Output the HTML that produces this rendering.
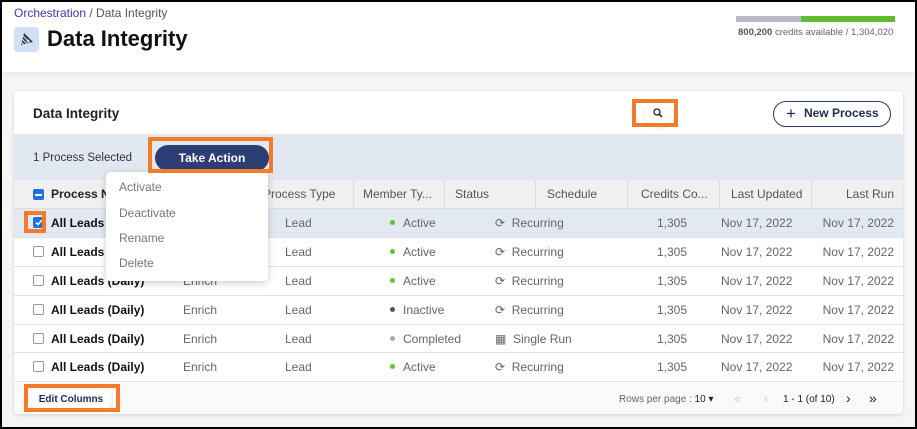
<!DOCTYPE html>
<html><head><meta charset="utf-8"><style>
*{box-sizing:border-box;margin:0;padding:0}
body{width:917px;height:429px;overflow:hidden;font-family:"Liberation Sans",sans-serif;background:#000;position:relative}
.frame{position:absolute;left:2px;top:2px;width:913px;height:425px;background:#f5f5f5;overflow:hidden}
.hdr{position:absolute;left:0;top:0;width:913px;height:70px;background:#fff;box-shadow:0 2px 6px rgba(0,0,0,.06)}
.a{position:absolute;white-space:nowrap}
.card{position:absolute;left:12px;top:89px;width:889px;height:323px;background:#fff;border-radius:4px;box-shadow:0 1px 3px rgba(0,0,0,.15);overflow:hidden}
.sel{position:absolute;left:0;top:43px;width:889px;height:46px;background:#e2e8f1}
.th{position:absolute;left:0;top:89px;width:889px;height:29px;background:#f0f0f0;border-bottom:1px solid #ddd;font-size:12px;color:#555}
.th .sep{position:absolute;top:0;width:1px;height:29px;background:#dcdcdc}
.row{position:absolute;left:0;width:889px;height:29px;border-bottom:1px solid #e2e2e2;font-size:12px;color:#666}
.row span,.th span{position:absolute;top:7px}
.cb{position:absolute;left:19px;top:8px;width:11px;height:11px;border:1.5px solid #999;border-radius:2px;background:#fff}
.dot{display:inline-block;width:5px;height:5px;border-radius:50%;margin-right:8px;vertical-align:middle;position:relative;top:-1px}
.ob{position:absolute;border:4px solid #f47b2a}
.menu{position:absolute;width:162px;height:109px;background:#fff;border-radius:4px;box-shadow:0 2px 8px rgba(0,0,0,.2);font-size:12px;color:#777}
.menu div{position:absolute;left:13px}
</style></head><body>
<div class="frame">
<div class="hdr">
 <div class="a" style="left:12px;top:4px;font-size:12px;color:#555"><span style="color:#4a2fbd">Orchestration</span> / Data Integrity</div>
 <div class="a" style="left:12px;top:25px;width:25px;height:25px;background:#cfe0f7;border-radius:4px"></div>
 <svg class="a" style="left:15px;top:28px" width="19" height="19" viewBox="0 0 19 19"><path d="M7 3 L16 12 L4 15 Z" fill="#333"/><path d="M4 8 L11 15 M3 11 L7 15 M5 5 L13 13" stroke="#cfe0f7" stroke-width="1.2"/><circle cx="11" cy="11" r="1.5" fill="#cfe0f7"/></svg>
 <div class="a" style="left:45px;top:24px;font-size:22px;font-weight:bold;color:#111">Data Integrity</div>
 <div class="a" style="left:734px;top:14px;width:65px;height:6px;background:#b8bac2"></div>
 <div class="a" style="left:799px;top:14px;width:94px;height:6px;background:#62bb2e"></div>
 <div class="a" style="left:736px;top:25px;font-size:9.5px;color:#666"><b style="color:#555">800,200</b> credits available / 1,304,020</div>
</div>
<div class="card">
 <div class="a" style="left:19px;top:15px;font-size:13.5px;font-weight:bold;color:#222">Data Integrity</div>
 <div class="a" style="left:630px;top:12px;width:30px;height:23px;border-radius:12px;background:#fff;box-shadow:0 1px 3px rgba(0,0,0,.15)"></div>
 <svg class="a" style="left:639px;top:17px" width="10" height="10" viewBox="0 0 10 10"><circle cx="4" cy="4" r="3" fill="none" stroke="#222" stroke-width="1.3"/><path d="M6.2 6.2 L9 9" stroke="#222" stroke-width="1.5"/></svg>
 <div class="a" style="left:759px;top:10px;width:118px;height:26px;border:1.5px solid #2e3a6a;border-radius:13px;font-size:12px;font-weight:bold;color:#1f2a5a;line-height:23px;padding-left:12px"><span style="font-size:17px;font-weight:normal;vertical-align:-2px;margin-right:8px">+</span>New Process</div>
 <div class="sel">
  <div class="a" style="left:19px;top:18px;font-size:11.5px;color:#333">1 Process Selected</div>
  <div class="a" style="left:141px;top:11px;width:114px;height:26px;background:#2b3f75;border-radius:13px;color:#fff;font-size:12px;font-weight:bold;text-align:center;line-height:26px">Take Action</div>
 </div>
 <div class="th">
  <div class="a" style="left:19px;top:9px;width:11px;height:11px;background:#1e6fe0;border-radius:2px"><div style="position:absolute;left:2px;top:4.5px;width:7px;height:2px;background:#fff"></div></div>
  <span style="left:37px;font-weight:bold;color:#222">Process N</span>
  <span style="left:249px">Process Type</span>
  <div class="sep" style="left:339px"></div><span style="left:349px">Member Ty...</span>
  <div class="sep" style="left:430px"></div><span style="left:441px">Status</span>
  <div class="sep" style="left:521px"></div><span style="left:533px">Schedule</span>
  <div class="sep" style="left:613px"></div><span style="left:627px">Credits Co...</span>
  <div class="sep" style="left:705px"></div><span style="left:717px">Last Updated</span>
  <div class="sep" style="left:797px"></div><span style="right:9px">Last Run</span>
 </div>
 <div class="row" style="top:118px;background:#e3e9f2"><div class="cb" style="background:#1e6fe0;border-color:#1e6fe0"></div><svg class="a" style="left:21px;top:10px" width="8" height="7"><path d="M1 3.5 L3 5.5 L7 1" stroke="#fff" stroke-width="1.5" fill="none"/></svg><span style="left:37px;font-weight:bold;color:#111">All Leads (Daily)</span><span style="left:169px">Enrich</span><span style="left:271px">Lead</span><span style="left:376px"><i class="dot" style="background:#6cc02e"></i>Active</span><span style="left:481px">⟳&nbsp;&nbsp;Recurring</span><span style="right:216px">1,305</span><span style="left:707px">Nov 17, 2022</span><span style="right:9px">Nov 17, 2022</span></div>
 <div class="row" style="top:147px"><div class="cb"></div><span style="left:37px;font-weight:bold;color:#111">All Leads (Daily)</span><span style="left:169px">Enrich</span><span style="left:271px">Lead</span><span style="left:376px"><i class="dot" style="background:#6cc02e"></i>Active</span><span style="left:481px">⟳&nbsp;&nbsp;Recurring</span><span style="right:216px">1,305</span><span style="left:707px">Nov 17, 2022</span><span style="right:9px">Nov 17, 2022</span></div>
 <div class="row" style="top:176px"><div class="cb"></div><span style="left:37px;font-weight:bold;color:#111">All Leads (Daily)</span><span style="left:169px">Enrich</span><span style="left:271px">Lead</span><span style="left:376px"><i class="dot" style="background:#6cc02e"></i>Active</span><span style="left:481px">⟳&nbsp;&nbsp;Recurring</span><span style="right:216px">1,305</span><span style="left:707px">Nov 17, 2022</span><span style="right:9px">Nov 17, 2022</span></div>
 <div class="row" style="top:205px"><div class="cb"></div><span style="left:37px;font-weight:bold;color:#111">All Leads (Daily)</span><span style="left:169px">Enrich</span><span style="left:271px">Lead</span><span style="left:376px"><i class="dot" style="background:#555"></i>Inactive</span><span style="left:481px">⟳&nbsp;&nbsp;Recurring</span><span style="right:216px">1,305</span><span style="left:707px">Nov 17, 2022</span><span style="right:9px">Nov 17, 2022</span></div>
 <div class="row" style="top:234px;height:28px"><div class="cb"></div><span style="left:37px;font-weight:bold;color:#111">All Leads (Daily)</span><span style="left:169px">Enrich</span><span style="left:271px">Lead</span><span style="left:376px"><i class="dot" style="background:#aaa"></i>Completed</span><span style="left:481px">▦&nbsp;&nbsp;Single Run</span><span style="right:216px">1,305</span><span style="left:707px">Nov 17, 2022</span><span style="right:9px">Nov 17, 2022</span></div>
 <div class="row" style="top:262px"><div class="cb"></div><span style="left:37px;font-weight:bold;color:#111">All Leads (Daily)</span><span style="left:169px">Enrich</span><span style="left:271px">Lead</span><span style="left:376px"><i class="dot" style="background:#6cc02e"></i>Active</span><span style="left:481px">⟳&nbsp;&nbsp;Recurring</span><span style="right:216px">1,305</span><span style="left:707px">Nov 17, 2022</span><span style="right:9px">Nov 17, 2022</span></div>
 <div class="a" style="left:0;top:292px;width:889px;height:31px;background:#fafafa"></div>
 <div class="a" style="left:16px;top:298px;width:82px;height:21px;background:#fff;border-radius:10px;box-shadow:0 1px 2px rgba(0,0,0,.15);font-size:10px;font-weight:bold;color:#1f2a5a;text-align:center;line-height:21px">Edit Columns</div>
 <div class="a" style="left:605px;top:303px;font-size:10px;color:#666">Rows per page : <span style="color:#222">10 ▾</span></div>
 <div class="a" style="left:720px;top:300px;font-size:13px;color:#ccc">«</div>
 <div class="a" style="left:750px;top:300px;font-size:13px;color:#ccc">‹</div>
 <div class="a" style="left:769px;top:303px;font-size:10px;color:#222">1 - 1 (of 10)</div>
 <div class="a" style="left:832px;top:299px;font-size:14px;color:#222">›</div>
 <div class="a" style="left:855px;top:299px;font-size:14px;color:#222">»</div>
</div>
<div class="menu" style="left:104px;top:170px">
 <div style="top:8px">Activate</div><div style="top:34px">Deactivate</div><div style="top:59px">Rename</div><div style="top:84px">Delete</div>
</div>
<div class="ob" style="left:146px;top:135px;width:125px;height:36px"></div>
<div class="ob" style="left:630px;top:97px;width:46px;height:28px"></div>
<div class="ob" style="left:22px;top:209px;width:22px;height:22px"></div>
<div class="ob" style="left:22px;top:382px;width:96px;height:28px"></div>
</div>
</body></html>
